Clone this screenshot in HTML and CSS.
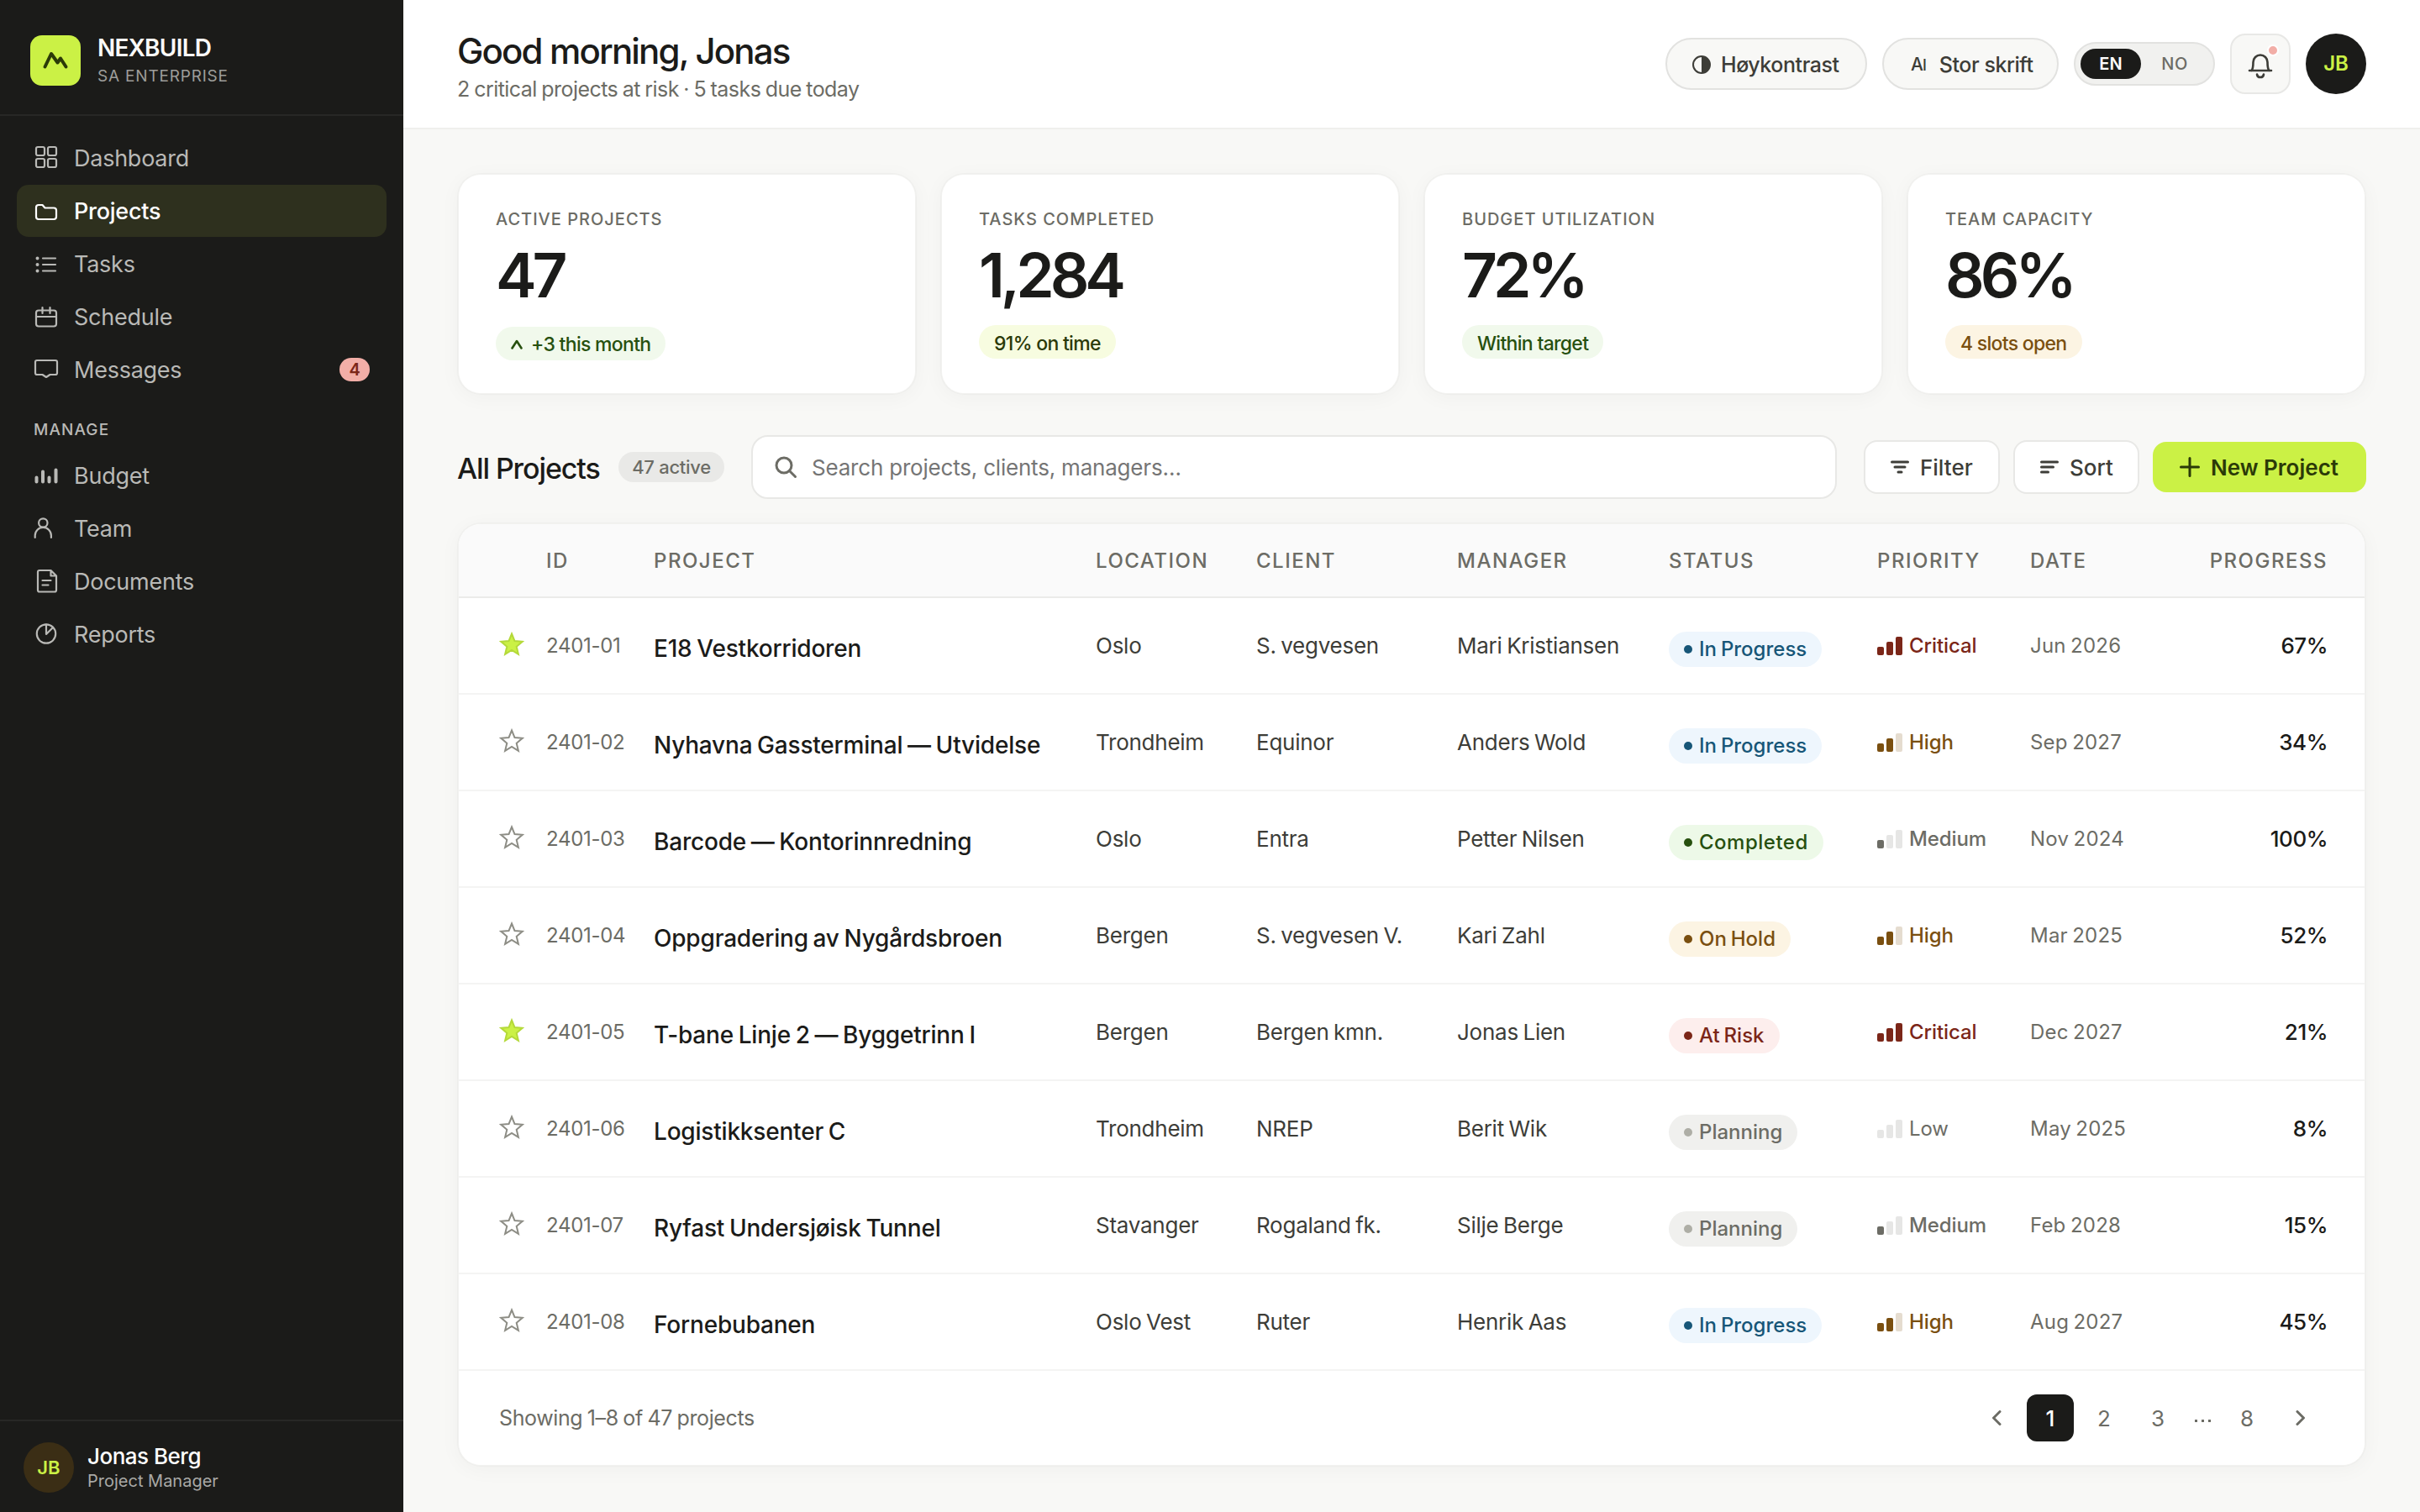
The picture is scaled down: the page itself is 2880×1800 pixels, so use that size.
FILE: index.html
```
<!DOCTYPE html>
<html lang="en">
<head>
  <meta charset="utf-8">
  <title>Nexbuild - Projects</title>
  <link rel="stylesheet" href="styles.css">
</head>
<body>
  <!-- shared star shape -->
  <svg class="defs">
    <symbol id="star" viewBox="0 0 30 30">
      <path d="M15 2.5l3.500 8.600 9.200.7-7 6 2.200 9L15 21.900l-7.900 4.900 2.200-9-7-6 9.200-.7z"/>
    </symbol>
  </svg>

  <aside class="sidebar">
    <div class="brand">
      <div class="logo">
        <svg width="60" height="60" viewBox="0 0 60 60"><path d="M17.500 37.500L25 22l7.500 10.500L36 27.500 42.500 37.500"/></svg>
      </div>
      <div>
        <div class="brand-name">NEXBUILD</div>
        <div class="brand-sub">SA ENTERPRISE</div>
      </div>
    </div>

    <nav class="nav">
      <a class="nav-item"><svg viewBox="0 0 28 28"><rect x="2" y="1" width="10" height="10" rx="2"/><rect x="16" y="1" width="10" height="10" rx="2"/><rect x="2" y="15" width="10" height="10" rx="2"/><rect x="16" y="15" width="10" height="10" rx="2"/></svg>Dashboard</a>
      <a class="nav-item active"><svg viewBox="0 0 28 28"><path d="M2 21V10a3 3 0 0 1 3-3h4.500l3 3.500H23a3 3 0 0 1 3 3V21a3 3 0 0 1-3 3H5a3 3 0 0 1-3-3z"/></svg>Projects</a>
      <a class="nav-item"><svg viewBox="0 0 28 28"><path d="M10 7.500h15M10 15h15M10 22.500h15"/><path class="thick" d="M3.500 7.500h.01M3.500 15h.01M3.500 22.500h.01"/></svg>Tasks</a>
      <a class="nav-item"><svg viewBox="0 0 28 28"><rect x="2" y="6.500" width="24" height="19" rx="3"/><path d="M2 14h24M9.500 3v7M18.500 3v7"/></svg>Schedule</a>
      <a class="nav-item"><svg viewBox="0 0 28 28"><path d="M3 3h22a2 2 0 0 1 2 2v13a2 2 0 0 1-2 2h-6.500L14 23l-4.500-3H3a2 2 0 0 1-2-2V5a2 2 0 0 1 2-2z"/></svg>Messages<span class="badge">4</span></a>
      <div class="nav-label">MANAGE</div>
      <a class="nav-item"><svg viewBox="0 0 28 28"><path class="thick" d="M2.500 21.500v-5M10 21.500V9.500M17.500 21.500v-5M25.500 21.500v-14"/></svg>Budget</a>
      <a class="nav-item"><svg viewBox="0 0 28 28"><circle cx="10.300" cy="7.500" r="5.200"/><path d="M.7 25v-2.500a9.600 9.600 0 0 1 19.200 0V25"/></svg>Team</a>
      <a class="nav-item"><svg viewBox="0 0 28 28"><path d="M19.500 1H6a2 2 0 0 0-2 2v21.500a2 2 0 0 0 2 2h18a2 2 0 0 0 2-2V7.500zV7.500H26M9.500 13h10M9.500 18.500h7"/></svg>Documents</a>
      <a class="nav-item"><svg viewBox="0 0 28 28"><circle cx="14" cy="13.500" r="11.200"/><path d="M14 2.500V14l8-8"/></svg>Reports</a>
    </nav>

    <div class="user">
      <div class="user-avatar">JB</div>
      <div>
        <div class="user-name">Jonas Berg</div>
        <div class="user-role">Project Manager</div>
      </div>
    </div>
  </aside>

  <main class="main">
    <header class="topbar">
      <div class="greeting">
        <h1>Good morning, Jonas</h1>
        <p>2 critical projects at risk · 5 tasks due today</p>
      </div>
      <div class="top-actions">
        <button class="pill-btn contrast"><svg width="22" height="22" viewBox="0 0 22 22"><circle cx="11" cy="11" r="10" fill="none" stroke="currentColor" stroke-width="2"/><path d="M11 1a10 10 0 0 1 0 20z" fill="currentColor"/></svg>Høykontrast</button>
        <button class="pill-btn large-text"><span class="aa">A<small>I</small></span>Stor skrift</button>
        <div class="lang"><span class="on">EN</span><span>NO</span></div>
        <button class="bell">
          <svg width="36" height="36" viewBox="0 0 36 36"><path d="M5 26h26M7.500 26c1.800-2 2-5 2-10a8.500 8.500 0 0 1 17 0c0 5 .2 8 2 10M14 30.500c.5 4.700 7.500 4.700 8 0"/></svg>
          <i></i>
        </button>
        <div class="avatar">JB</div>
      </div>
    </header>

    <div class="content">
      <section class="stats">
        <div class="card">
          <div class="card-label">ACTIVE PROJECTS</div>
          <div class="card-value">47</div>
          <span class="tag green up"><svg width="14" height="12" viewBox="0 0 14 12"><path d="M1.500 10.500L7 2l5.500 8.500"/></svg>+3 this month</span>
        </div>
        <div class="card">
          <div class="card-label">TASKS COMPLETED</div>
          <div class="card-value">1,284</div>
          <span class="tag lime">91% on time</span>
        </div>
        <div class="card">
          <div class="card-label">BUDGET UTILIZATION</div>
          <div class="card-value">72%</div>
          <span class="tag green">Within target</span>
        </div>
        <div class="card">
          <div class="card-label">TEAM CAPACITY</div>
          <div class="card-value">86%</div>
          <span class="tag amber">4 slots open</span>
        </div>
      </section>

      <section class="toolbar">
        <h2>All Projects</h2>
        <span class="count">47 active</span>
        <label class="search">
          <svg width="28" height="28" viewBox="0 0 28 28"><circle cx="11" cy="12" r="9"/><path d="M17.500 18.500l7 7"/></svg>
          <input type="text" placeholder="Search projects, clients, managers…">
        </label>
        <button class="btn filter"><svg width="22" height="16" viewBox="0 0 22 16"><path d="M1.500 2h19M5 8h12M9 14h4"/></svg>Filter</button>
        <button class="btn sort"><svg width="22" height="16" viewBox="0 0 22 16"><path d="M1.500 2h19M1.500 8h14M1.500 14h8"/></svg>Sort</button>
        <button class="btn primary"><svg width="24" height="24" viewBox="0 0 24 24"><path d="M12 1.500v21M1.500 12h21"/></svg>New Project</button>
      </section>

      <section class="table">
        <div class="row head">
          <span></span><span>ID</span><span>PROJECT</span><span>LOCATION</span><span>CLIENT</span><span>MANAGER</span><span>STATUS</span><span>PRIORITY</span><span>DATE</span><span class="right">PROGRESS</span>
        </div>
        <div class="row">
          <svg class="star on"><use href="#star"/></svg><span class="id">2401-01</span><span class="name">E18 Vestkorridoren</span><span>Oslo</span><span>S. vegvesen</span><span>Mari Kristiansen</span>
          <span class="status progress">In Progress</span><span class="prio critical"><i></i><i></i><i></i>Critical</span><span class="date">Jun 2026</span><span class="pct">67%</span>
        </div>
        <div class="row">
          <svg class="star"><use href="#star"/></svg><span class="id">2401-02</span><span class="name">Nyhavna Gassterminal — Utvidelse</span><span>Trondheim</span><span>Equinor</span><span>Anders Wold</span>
          <span class="status progress">In Progress</span><span class="prio high"><i></i><i></i><i></i>High</span><span class="date">Sep 2027</span><span class="pct">34%</span>
        </div>
        <div class="row">
          <svg class="star"><use href="#star"/></svg><span class="id">2401-03</span><span class="name">Barcode — Kontorinnredning</span><span>Oslo</span><span>Entra</span><span>Petter Nilsen</span>
          <span class="status completed">Completed</span><span class="prio medium"><i></i><i></i><i></i>Medium</span><span class="date">Nov 2024</span><span class="pct">100%</span>
        </div>
        <div class="row">
          <svg class="star"><use href="#star"/></svg><span class="id">2401-04</span><span class="name">Oppgradering av Nygårdsbroen</span><span>Bergen</span><span>S. vegvesen V.</span><span>Kari Zahl</span>
          <span class="status hold">On Hold</span><span class="prio high"><i></i><i></i><i></i>High</span><span class="date">Mar 2025</span><span class="pct">52%</span>
        </div>
        <div class="row">
          <svg class="star on"><use href="#star"/></svg><span class="id">2401-05</span><span class="name">T-bane Linje 2 — Byggetrinn I</span><span>Bergen</span><span>Bergen kmn.</span><span>Jonas Lien</span>
          <span class="status risk">At Risk</span><span class="prio critical"><i></i><i></i><i></i>Critical</span><span class="date">Dec 2027</span><span class="pct">21%</span>
        </div>
        <div class="row">
          <svg class="star"><use href="#star"/></svg><span class="id">2401-06</span><span class="name">Logistikksenter C</span><span>Trondheim</span><span>NREP</span><span>Berit Wik</span>
          <span class="status planning">Planning</span><span class="prio low"><i></i><i></i><i></i>Low</span><span class="date">May 2025</span><span class="pct">8%</span>
        </div>
        <div class="row">
          <svg class="star"><use href="#star"/></svg><span class="id">2401-07</span><span class="name">Ryfast Undersjøisk Tunnel</span><span>Stavanger</span><span>Rogaland fk.</span><span>Silje Berge</span>
          <span class="status planning">Planning</span><span class="prio medium"><i></i><i></i><i></i>Medium</span><span class="date">Feb 2028</span><span class="pct">15%</span>
        </div>
        <div class="row">
          <svg class="star"><use href="#star"/></svg><span class="id">2401-08</span><span class="name">Fornebubanen</span><span>Oslo Vest</span><span>Ruter</span><span>Henrik Aas</span>
          <span class="status progress">In Progress</span><span class="prio high"><i></i><i></i><i></i>High</span><span class="date">Aug 2027</span><span class="pct">45%</span>
        </div>
        <div class="table-foot">
          <span class="showing">Showing 1–8 of 47 projects</span>
          <div class="pages">
            <a><svg width="12" height="18" viewBox="0 0 12 18"><path d="M10 1.500L2.500 9l7.500 7.500"/></svg></a>
            <a class="current">1</a>
            <a>2</a>
            <a>3</a>
            <span class="dots"><i></i><i></i><i></i></span>
            <a>8</a>
            <a><svg width="12" height="18" viewBox="0 0 12 18"><path d="M2 1.500L9.500 9 2 16.500"/></svg></a>
          </div>
        </div>
      </section>
    </div>
  </main>
</body>
</html>
```
FILE: styles.css
```
* {
  box-sizing: border-box;
  margin: 0;
  padding: 0;
}

body {
  display: flex;
  width: 2880px;
  height: 1800px;
  overflow: hidden;
  font-family: Inter, "Liberation Sans", sans-serif;
  font-size: 26px;
  color: #1b1b19;
  background: #f8f8f6;
}

button {
  font: inherit;
  color: inherit;
}

.defs {
  display: none;
}

/* Sidebar */
.sidebar {
  display: flex;
  flex-direction: column;
  width: 480px;
  flex: none;
  background: #1b1b19;
  color: #b9b9b6;
}

.brand {
  display: flex;
  align-items: center;
  gap: 20px;
  height: 138px;
  padding: 8px 36px 0;
  border-bottom: 2px solid #282826;
}

.logo {
  width: 60px;
  height: 60px;
  border-radius: 14px;
  background: #cbf145;
}

.logo svg {
  fill: none;
  stroke: #2b3a08;
  stroke-width: 4;
  stroke-linecap: round;
  stroke-linejoin: round;
}

.brand-name {
  font-size: 28px;
  line-height: 36px;
  font-weight: 600;
  letter-spacing: -0.75px;
  color: #fafaf8;
}

.brand-sub {
  font-size: 19px;
  line-height: 31px;
  letter-spacing: 0.8px;
  color: #9d9d9a;
}

.nav {
  display: flex;
  flex-direction: column;
  gap: 1px;
  padding: 19px 20px;
  flex: 1;
}

.nav-item {
  display: flex;
  align-items: center;
  gap: 19px;
  height: 62px;
  padding: 0 20px 0 21px;
  border-radius: 14px;
  font-size: 27px;
  letter-spacing: -0.25px;
}

.nav-item svg {
  width: 28px;
  height: 28px;
  overflow: visible;
  fill: none;
  stroke: currentColor;
  stroke-width: 2.2;
  stroke-linecap: round;
  stroke-linejoin: round;
}

.nav-item .thick {
  stroke-width: 4;
}

.nav-item.active {
  background: #2e301e;
  color: #fff;
  font-weight: 500;
}

.badge {
  margin-left: auto;
  width: 36px;
  height: 28px;
  border-radius: 14px;
  background: #f2aea7;
  color: #7b2618;
  font-size: 20px;
  line-height: 28px;
  font-weight: 600;
  text-align: center;
}

.nav-label {
  height: 62px;
  padding: 17px 20px 0;
  font-size: 19px;
  line-height: 46px;
  font-weight: 500;
  letter-spacing: 1.1px;
}

.user {
  display: flex;
  align-items: center;
  gap: 16px;
  height: 110px;
  padding: 2px 28px 0;
  border-top: 2px solid #282826;
}

.user-avatar {
  width: 60px;
  height: 60px;
  border-radius: 50%;
  background: #3b2e15;
  color: #cbf145;
  font-size: 22px;
  line-height: 60px;
  font-weight: 600;
  text-align: center;
}

.user-name {
  padding-top: 2px;
  font-size: 26px;
  line-height: 30px;
  font-weight: 500;
  letter-spacing: -0.5px;
  color: #fff;
}

.user-role {
  font-size: 20px;
  line-height: 28px;
  color: #a9a9a6;
}

/* Top bar */
.main {
  flex: 1;
  min-width: 0;
}

.topbar {
  display: flex;
  justify-content: space-between;
  align-items: center;
  height: 154px;
  padding: 0 64px;
  background: #fff;
  border-bottom: 2px solid #efefed;
}

.greeting {
  padding-top: 9px;
}

.greeting h1 {
  font-size: 42px;
  line-height: 50px;
  font-weight: 500;
  letter-spacing: -1.85px;
}

.greeting p {
  font-size: 25px;
  line-height: 40px;
  letter-spacing: -0.55px;
  word-spacing: -1px;
  color: #6c6c65;
}

.top-actions {
  display: flex;
  align-items: center;
  gap: 18px;
}

.pill-btn {
  display: flex;
  align-items: center;
  height: 62px;
  padding: 1px 0 0 30px;
  border: 2px solid #e2e2e0;
  border-radius: 31px;
  background: #f8f8f6;
  color: #3d3d38;
  font-size: 25px;
  font-weight: 500;
  letter-spacing: -0.45px;
  gap: 12px;
}

.contrast {
  width: 240px;
}

.large-text {
  width: 210px;
  padding-left: 32px;
  gap: 16px;
}

.aa {
  font-size: 21px;
  font-weight: 500;
  letter-spacing: -1px;
}

.aa small {
  font-size: 18px;
}

.lang {
  display: flex;
  align-items: center;
  width: 168px;
  height: 52px;
  padding: 0 6px;
  border: 2px solid #e2e2e0;
  border-radius: 26px;
  background: #f1f1ef;
  gap: 4px;
}

.lang span {
  width: 72px;
  height: 36px;
  border-radius: 18px;
  font-size: 20px;
  line-height: 36px;
  font-weight: 500;
  letter-spacing: 0.6px;
  text-align: center;
  color: #6c6c65;
}

.lang .on {
  background: #1b1b19;
  color: #fff;
  font-weight: 600;
  letter-spacing: 0;
}

.bell {
  position: relative;
  display: flex;
  align-items: center;
  justify-content: center;
  width: 72px;
  height: 72px;
  border: 2px solid #e8e8e6;
  border-radius: 18px;
  background: #f8f8f6;
}

.bell svg {
  fill: none;
  stroke: #3d3d38;
  stroke-width: 2.6;
  stroke-linecap: round;
  stroke-linejoin: round;
}

.bell i {
  position: absolute;
  top: 11px;
  right: 12px;
  width: 14px;
  height: 14px;
  border: 2px solid #fff;
  border-radius: 50%;
  background: #f2aea7;
}

.avatar {
  width: 72px;
  height: 72px;
  border-radius: 50%;
  background: #1b1b19;
  color: #cbf145;
  font-size: 24px;
  line-height: 72px;
  font-weight: 600;
  text-align: center;
}

.content {
  padding: 52px 64px 0;
}

/* Stat cards */
.stats {
  display: grid;
  grid-template-columns: repeat(4, 1fr);
  gap: 28px;
}

.card {
  display: flex;
  flex-direction: column;
  align-items: flex-start;
  height: 264px;
  padding: 39px 44px 0;
  border: 2px solid rgba(0, 0, 0, 0.025);
  border-radius: 28px;
  background: #fff;
  background-clip: padding-box;
  box-shadow: 0 4px 24px rgba(0, 0, 0, 0.035);
}

.card-label {
  font-size: 20px;
  line-height: 28px;
  font-weight: 500;
  letter-spacing: 1px;
  color: #6c6c65;
}

.card-value {
  margin: 13px 0 19px;
  font-size: 73px;
  line-height: 80px;
  font-weight: 600;
  letter-spacing: -5px;
}

.tag {
  display: flex;
  align-items: center;
  gap: 10px;
  height: 40px;
  padding: 3px 18px 0;
  border-radius: 20px;
  font-size: 23px;
  font-weight: 500;
  letter-spacing: -0.7px;
}

.tag.up {
  margin-top: 2px;
  padding-top: 1px;
}

.tag svg {
  fill: none;
  stroke: currentColor;
  stroke-width: 2.6;
  stroke-linecap: round;
  stroke-linejoin: round;
}

.green {
  background: #f1f9ec;
  color: #27500f;
}

.lime {
  background: #f7fce0;
  color: #2b3a08;
}

.amber {
  background: #fcf4e3;
  color: #7a4f10;
}

/* Toolbar */
.toolbar {
  display: flex;
  align-items: center;
  height: 76px;
  margin: 48px 0 28px;
}

.toolbar h2 {
  width: 192px;
  padding-top: 3px;
  font-size: 34px;
  font-weight: 500;
  letter-spacing: -1.1px;
  white-space: nowrap;
}

.count {
  width: 126px;
  height: 36px;
  border-radius: 18px;
  background: #e9e9e7;
  color: #6c6c65;
  font-size: 22px;
  line-height: 36px;
  font-weight: 500;
  letter-spacing: -0.3px;
  text-align: center;
}

.search {
  display: flex;
  align-items: center;
  gap: 16px;
  flex: 1;
  height: 76px;
  margin: 0 32px;
  padding: 0 26px;
  border: 2px solid #e8e8e6;
  border-radius: 20px;
  background: #fff;
}

.search svg {
  fill: none;
  stroke: #6c6c65;
  stroke-width: 3;
  stroke-linecap: round;
}

.search input {
  flex: 1;
  border: 0;
  outline: 0;
  background: none;
  font: inherit;
  letter-spacing: -0.2px;
}

.search input::placeholder {
  color: #757575;
}

.btn {
  display: flex;
  align-items: center;
  gap: 13px;
  height: 64px;
  padding: 0 0 0 30px;
  border: 2px solid #e8e8e6;
  border-radius: 16px;
  background: #fff;
  color: #3d3d38;
  font-size: 26px;
  font-weight: 500;
}

.btn svg {
  fill: none;
  stroke: currentColor;
  stroke-width: 3;
  stroke-linecap: round;
}

.btn.filter {
  width: 162px;
}

.btn.sort {
  width: 150px;
  margin: 0 16px;
}

.btn.primary {
  width: 254px;
  height: 60px;
  padding-left: 32px;
  border: 0;
  background: #cbf145;
  color: #2b3a08;
  font-weight: 600;
}

/* Table */
.table {
  border: 2px solid rgba(0, 0, 0, 0.025);
  border-radius: 28px;
  background: #fff;
  background-clip: padding-box;
  box-shadow: 0 4px 24px rgba(0, 0, 0, 0.035);
  overflow: hidden;
}

.row {
  display: grid;
  grid-template-columns: 56px 128px 526px 191px 239px 252px 248px 182px 160px 1fr;
  align-items: center;
  height: 115px;
  padding: 0 44px 0 48px;
  border-bottom: 2px solid #f4f4f3;
  color: #3d3d38;
  letter-spacing: -0.25px;
  word-spacing: -1.5px;
  white-space: nowrap;
}

.row.head {
  height: 88px;
  background: #fafafa;
  border-bottom-color: #ebebe9;
  color: #6c6c65;
  font-size: 24px;
  font-weight: 500;
  letter-spacing: 1.5px;
}

.right {
  text-align: right;
}

.star {
  width: 30px;
  height: 30px;
  margin-bottom: 4px;
  fill: none;
  stroke: #8d8d85;
  stroke-width: 2;
}

.star.on {
  fill: #cbf145;
  stroke: #b4d93a;
}

.id {
  font-size: 24px;
  letter-spacing: -0.3px;
  color: #6c6c65;
}

.name {
  margin-top: 6px;
  font-size: 28px;
  line-height: 40px;
  font-weight: 500;
  letter-spacing: -0.2px;
  color: #1b1b19;
}

.status {
  display: flex;
  align-items: center;
  gap: 8px;
  justify-self: start;
  height: 42px;
  margin-top: 8px;
  padding: 0 18px;
  border-radius: 21px;
  font-size: 24px;
  font-weight: 500;
  letter-spacing: 0;
}

.status::before {
  content: "";
  width: 10px;
  height: 10px;
  border-radius: 50%;
  background: currentColor;
}

.progress {
  background: #eef6fd;
  color: #175678;
}

.completed {
  background: #edf9e8;
  color: #27500f;
  letter-spacing: 0.5px;
}

.hold {
  background: #fcf4e3;
  color: #7a4f10;
}

.risk {
  background: #fdeeed;
  color: #7b2618;
}

.planning {
  background: #f0f0ee;
  color: #6c6c65;
}

.planning::before {
  background: #aeaea6;
}

.prio {
  display: flex;
  align-items: flex-end;
  gap: 3px;
  font-size: 24px;
  line-height: 22px;
  font-weight: 500;
  letter-spacing: -0.1px;
}

.prio i {
  width: 8px;
  height: 22px;
  border-radius: 2px;
  background: currentColor;
}

.prio i:nth-child(1) {
  height: 10px;
}

.prio i:nth-child(2) {
  height: 16px;
}

.prio i:nth-child(3) {
  margin-right: 5px;
}

.critical {
  color: #7b2618;
}

.high {
  color: #7a4f10;
}

.high i:nth-child(3) {
  background: #e5dccf;
}

.medium,
.low {
  color: #6c6c65;
}

.low {
  font-weight: 400;
}

.medium i:nth-child(n+2),
.low i {
  background: #e6e6e5;
}

.date {
  font-size: 24px;
  letter-spacing: 0.2px;
  color: #6c6c65;
}

.pct {
  text-align: right;
  font-weight: 500;
  letter-spacing: -0.5px;
  color: #1b1b19;
}

.table-foot {
  display: flex;
  align-items: center;
  justify-content: space-between;
  height: 112px;
  padding: 0 48px;
}

.showing {
  font-size: 25px;
  letter-spacing: -0.4px;
  word-spacing: -1px;
  color: #6c6c65;
}

.pages {
  display: flex;
  align-items: center;
  gap: 8px;
  color: #6c6c65;
}

.pages a {
  display: flex;
  align-items: center;
  justify-content: center;
  width: 56px;
  height: 56px;
  border-radius: 12px;
}

.pages .current {
  background: #1b1b19;
  color: #fff;
  font-weight: 500;
}

.pages svg {
  fill: none;
  stroke: currentColor;
  stroke-width: 3;
  stroke-linecap: round;
  stroke-linejoin: round;
}

.dots {
  display: flex;
  justify-content: center;
  gap: 5px;
  width: 34px;
  padding-top: 6px;
}

.dots i {
  width: 3px;
  height: 3px;
  background: currentColor;
}
```
